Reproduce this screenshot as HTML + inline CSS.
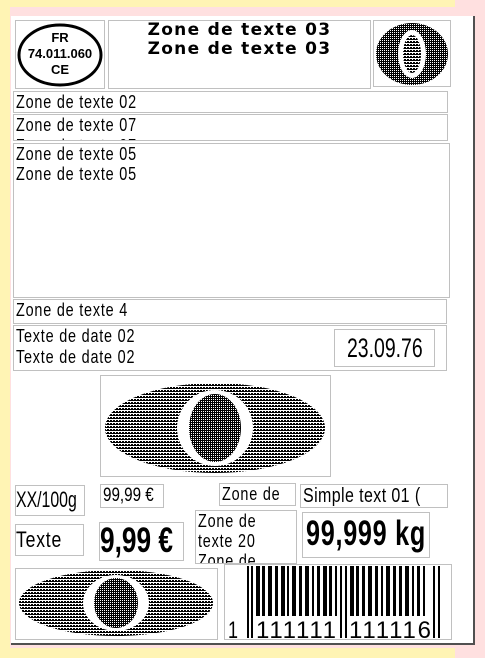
<!DOCTYPE html>
<html><head><meta charset="utf-8"><style>
*{margin:0;padding:0;box-sizing:border-box}
body{width:485px;height:658px;background:#fff4b4;position:relative;overflow:hidden;font-family:"Liberation Sans",sans-serif}
.a{position:absolute}
.b{position:absolute;border:1px solid #c0c0c0;background:#fff;overflow:hidden}
.t{font-size:18px;line-height:20px;color:#000;padding-left:2px;white-space:nowrap}
.s{display:inline-block;transform:scaleX(.8);transform-origin:0 0;letter-spacing:1px}
</style></head><body>
<div class="a" style="left:455px;top:0;width:30px;height:658px;background:#ffe0e0"></div>
<div class="a" style="left:10px;top:7px;width:465px;height:641px;background:#ffe0e0"></div>
<div class="a" style="left:11px;top:16px;width:464px;height:629px;background:#fff;border-right:2px solid #505050;border-bottom:2px solid #505050"></div>

<div class="b" style="left:15px;top:20px;width:90px;height:69px">
<svg width="90" height="69" class="a" style="left:0;top:0"><ellipse cx="44" cy="34" rx="41" ry="30" fill="none" stroke="#000" stroke-width="3"/></svg>
<div class="a" style="left:0;top:9px;width:88px;text-align:center;font:bold 13px/16px 'Liberation Sans',sans-serif">FR<br>74.011.060<br>CE</div>
</div>
<div class="b" style="left:108px;top:20px;width:263px;height:69px;text-align:center;font:bold 17px/19px 'DejaVu Sans','Liberation Sans',sans-serif;letter-spacing:1.3px">Zone de texte 03<br>Zone de texte 03</div>
<svg width="0" height="0" class="a"><defs>
<pattern id="d" width="3" height="3" patternUnits="userSpaceOnUse"><rect width="3" height="1" fill="#000"/><rect x="0" y="2" width="2" height="1" fill="#000"/></pattern>
<pattern id="e" width="2" height="2" patternUnits="userSpaceOnUse"><rect width="2" height="1" fill="#000"/><rect x="1" y="1" width="1" height="1" fill="#000"/></pattern>
</defs></svg>
<div class="b" style="left:373px;top:20px;width:78px;height:67px">
<svg width="78" height="67"><ellipse cx="38" cy="33" rx="36" ry="31" fill="url(#e)"/><ellipse cx="38" cy="33" rx="14" ry="24" fill="#fff"/><ellipse cx="38" cy="33" rx="9" ry="19" fill="url(#d)"/></svg>
</div>

<div class="b t" style="left:13px;top:91px;width:435px;height:22px"><span class="s">Zone de texte 02</span></div>
<div class="b t" style="left:13px;top:114px;width:435px;height:27px;line-height:21px"><span class="s">Zone de texte 07<br>Zone de texte 07</span></div>
<div class="b t" style="left:13px;top:143px;width:437px;height:155px"><span class="s">Zone de texte 05<br>Zone de texte 05</span></div>
<div class="b t" style="left:13px;top:299px;width:434px;height:25px"><span class="s">Zone de texte 4</span></div>
<div class="b t" style="left:13px;top:325px;width:434px;height:46px;line-height:21px"><span class="s">Texte de date 02<br>Texte de date 02</span></div>
<div class="b" style="left:334px;top:329px;width:101px;height:38px;font:27px/36px 'Liberation Sans',sans-serif;padding-left:12px"><span class="s" style="transform:scaleX(.72);letter-spacing:0">23.09.76</span></div>

<div class="b" style="left:100px;top:375px;width:231px;height:102px">
<svg width="231" height="102"><ellipse cx="114" cy="52" rx="110" ry="45" fill="url(#d)"/><ellipse cx="114" cy="52" rx="38" ry="38" fill="#fff"/><ellipse cx="114" cy="52" rx="26" ry="34" fill="url(#e)"/></svg>
</div>

<div class="b t" style="left:15px;top:485px;width:70px;height:31px;font-size:22px;line-height:28px;padding-left:0"><span class="s" style="transform:scaleX(.72);letter-spacing:0">XX/100g</span></div>
<div class="b t" style="left:100px;top:484px;width:64px;height:24px;font-size:19px;line-height:22px"><span class="s" style="letter-spacing:0">99,99 €</span></div>
<div class="b t" style="left:219px;top:483px;width:77px;height:23px"><span class="s">Zone de</span></div>
<div class="b t" style="left:300px;top:484px;width:148px;height:24px;font-size:20px;line-height:22px"><span class="s" style="letter-spacing:0.5px">Simple text 01 (</span></div>
<div class="b t" style="left:15px;top:524px;width:69px;height:32px;font-size:22px;line-height:30px;padding-left:0"><span class="s">Texte</span></div>
<div class="b" style="left:99px;top:522px;width:85px;height:39px;font:bold 35px/36px 'Liberation Sans',sans-serif;white-space:nowrap"><span class="s" style="transform:scaleX(.75);letter-spacing:0">9,99 €</span></div>
<div class="b t" style="left:195px;top:510px;width:102px;height:54px"><span class="s">Zone de<br>texte 20<br>Zone de</span></div>
<div class="b" style="left:302px;top:512px;width:128px;height:46px;font:bold 35px/42px 'Liberation Sans',sans-serif;white-space:nowrap;padding-left:3px"><span class="s" style="transform:scaleX(.72);letter-spacing:1px">99,999 kg</span></div>

<div class="b" style="left:15px;top:568px;width:203px;height:72px">
<svg width="203" height="72"><ellipse cx="100" cy="34" rx="97" ry="33" fill="url(#d)"/><ellipse cx="100" cy="34" rx="33" ry="28" fill="#fff"/><ellipse cx="100" cy="34" rx="22" ry="25" fill="url(#e)"/></svg>
</div>
<div class="b" style="left:224px;top:564px;width:228px;height:76px">
<svg width="228" height="76">
<g fill="#000">
<rect x="22" y="1" width="2" height="72"/><rect x="26" y="1" width="2" height="72"/>
<rect x="31" y="1" width="4" height="50"/><rect x="37" y="1" width="3" height="50"/><rect x="43" y="1" width="4" height="50"/><rect x="50" y="1" width="3" height="50"/><rect x="56" y="1" width="4" height="50"/><rect x="62" y="1" width="2" height="50"/><rect x="67" y="1" width="4" height="50"/><rect x="74" y="1" width="3" height="50"/><rect x="80" y="1" width="4" height="50"/><rect x="87" y="1" width="2" height="50"/><rect x="92" y="1" width="3" height="50"/><rect x="98" y="1" width="4" height="50"/><rect x="104" y="1" width="3" height="50"/><rect x="110" y="1" width="2" height="50"/>
<rect x="115" y="1" width="2" height="72"/><rect x="120" y="1" width="2" height="72"/>
<rect x="125" y="1" width="4" height="50"/><rect x="131" y="1" width="3" height="50"/><rect x="137" y="1" width="3" height="50"/><rect x="143" y="1" width="4" height="50"/><rect x="150" y="1" width="3" height="50"/><rect x="156" y="1" width="2" height="50"/><rect x="161" y="1" width="4" height="50"/><rect x="168" y="1" width="3" height="50"/><rect x="174" y="1" width="3" height="50"/><rect x="180" y="1" width="4" height="50"/><rect x="187" y="1" width="2" height="50"/><rect x="192" y="1" width="3" height="50"/><rect x="198" y="1" width="2" height="50"/>
<rect x="208" y="1" width="2" height="72"/><rect x="213" y="1" width="2" height="72"/>
</g>
<g font-family="Liberation Sans,sans-serif" font-size="24" fill="#000">
<text x="3" y="73" textLength="10" lengthAdjust="spacingAndGlyphs">1</text>
<text x="31" y="73" textLength="80" lengthAdjust="spacing">111111</text>
<text x="124" y="73" textLength="82" lengthAdjust="spacing">111116</text>
</g>
</svg>
</div>
</body></html>
